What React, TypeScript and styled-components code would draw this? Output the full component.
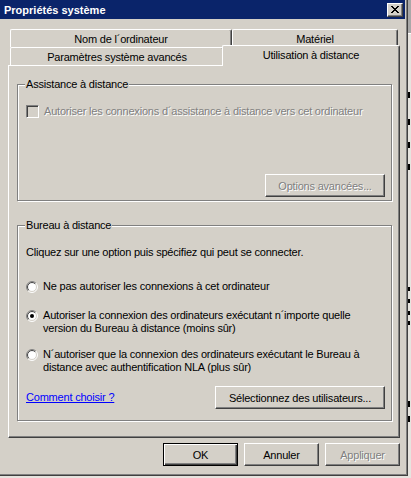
import React from "react";
import styled, { createGlobalStyle } from "styled-components";

const FACE = "#d4d0c8";
const SHADOW = "#808080";
const DARK = "#404040";

const GlobalStyle = createGlobalStyle`
  html, body {
    margin: 0;
    padding: 0;
    background: ${FACE};
  }
  body {
    font-family: "Liberation Sans", Arial, sans-serif;
    font-size: 11px;
    letter-spacing: -0.2px;
    color: #000;
  }
`;

const Screen = styled.div`
  width: 411px;
  height: 478px;
  display: flex;
  overflow: hidden;
  background: #e6e4df;
`;

const Frame = styled.div`
  width: 408px;
  height: 476px;
  flex-shrink: 0;
  box-sizing: border-box;
  padding: 0 2px 2px 0;
  background: ${FACE};
  border-right: 1px solid ${DARK};
  border-bottom: 1px solid ${DARK};
  box-shadow: inset -1px -1px ${SHADOW};
  display: flex;
  flex-direction: column;
`;

const TitleBar = styled.div`
  height: 19px;
  background: #0a246a;
  color: #fff;
  font-weight: bold;
  font-size: 11px;
  letter-spacing: 0;
  display: flex;
  align-items: center;
  justify-content: space-between;
  padding: 0 2px 0 4px;
`;

const CloseButton = styled.div`
  width: 16px;
  height: 14px;
  box-sizing: border-box;
  background: ${FACE};
  border: 1px solid;
  border-color: #fff ${DARK} ${DARK} #fff;
  box-shadow: inset -1px -1px ${SHADOW};
  display: flex;
  align-items: center;
  justify-content: center;
  padding-right: 1px;
`;

const Body = styled.div`
  padding: 10px 0 0 8px;
  display: flex;
  flex-direction: column;
`;

const TabRow = styled.div`
  display: flex;
  height: 18px;
  margin-left: 2px;
`;

const Tab = styled.div<{ $w: number; $selected?: boolean }>`
  width: ${(p) => p.$w}px;
  height: ${(p) => (p.$selected ? 21 : 18)}px;
  margin: ${(p) => (p.$selected ? "-2px -2px -1px -2px" : "0")};
  position: ${(p) => (p.$selected ? "relative" : "static")};
  z-index: ${(p) => (p.$selected ? 2 : 0)};
  box-sizing: border-box;
  background: ${FACE};
  border-top: 1px solid #fff;
  border-left: 1px solid #fff;
  border-right: 1px solid ${DARK};
  box-shadow: inset -1px 0 ${SHADOW};
  border-top-left-radius: 2px;
  border-top-right-radius: 2px;
  display: flex;
  justify-content: center;
  align-items: ${(p) => (p.$selected ? "flex-start" : "center")};
  padding-top: ${(p) => (p.$selected ? "3px" : "0")};
  white-space: nowrap;
`;

const Panel = styled.div`
  width: 392px;
  height: 373px;
  box-sizing: border-box;
  border: 1px solid;
  border-color: #fff ${DARK} ${DARK} #fff;
  box-shadow: inset -1px -1px ${SHADOW};
  padding: 12px 6px 0 8px;
  position: relative;
  z-index: 1;
`;

const Group = styled.fieldset<{ $top?: number }>`
  margin: ${(p) => p.$top ?? 0}px 0 0 0;
  padding: 0;
  width: 375px;
  box-sizing: border-box;
  border: 1px solid ${SHADOW};
  box-shadow: inset 1px 1px #fff, 1px 1px #fff;
`;

const Legend = styled.legend`
  margin-left: 7px;
  padding: 0 1px;
  line-height: 13px;
  background: ${FACE};
`;

const GroupBody = styled.div<{ $h: number }>`
  height: ${(p) => p.$h}px;
  box-sizing: border-box;
  padding: 0 6px 0 8px;
  display: flex;
  flex-direction: column;
`;

const Line = styled.div<{ $gap: number }>`
  margin-top: ${(p) => p.$gap}px;
  line-height: 13px;
`;

const OptionRow = styled.div<{ $gap: number; $disabled?: boolean }>`
  margin-top: ${(p) => p.$gap}px;
  display: flex;
  align-items: flex-start;
  gap: 5px;
  line-height: 13px;
  color: ${(p) => (p.$disabled ? SHADOW : "#000")};
  text-shadow: ${(p) => (p.$disabled ? "1px 1px #fff" : "none")};
`;

const CheckBox = styled.div`
  width: 13px;
  height: 13px;
  flex-shrink: 0;
  box-sizing: border-box;
  border: 1px solid;
  border-color: ${SHADOW} #fff #fff ${SHADOW};
  box-shadow: inset 1px 1px ${DARK}, inset -1px -1px ${FACE};
  background: ${FACE};
`;

const RadioBox = styled.svg`
  flex-shrink: 0;
  margin-top: 0.5px;
`;

const OptionText = styled.div`
  width: 320px;
`;

const Footer = styled.div<{ $gap: number }>`
  margin-top: ${(p) => p.$gap}px;
  display: flex;
  align-items: center;
  justify-content: space-between;
`;

const Link = styled.a`
  color: #0000ff;
  text-decoration: underline;
  line-height: 13px;
`;

const Button = styled.div<{ $w: number; $disabled?: boolean; $default?: boolean }>`
  width: ${(p) => p.$w}px;
  height: 23px;
  flex-shrink: 0;
  box-sizing: border-box;
  background: ${FACE};
  border: 1px solid;
  border-color: ${(p) =>
    p.$default ? "#000" : `#fff ${DARK} ${DARK} #fff`};
  box-shadow: ${(p) =>
    p.$default
      ? `inset 1px 1px #fff, inset -1px -1px ${DARK}, inset -2px -2px ${SHADOW}`
      : `inset -1px -1px ${SHADOW}`};
  display: flex;
  align-items: center;
  justify-content: center;
  color: ${(p) => (p.$disabled ? SHADOW : "#000")};
  text-shadow: ${(p) => (p.$disabled ? "1px 1px #fff" : "none")};
  white-space: nowrap;
`;

const CornerButton = styled(Button)`
  margin: auto 0 3px auto;
`;

const DialogButtons = styled.div`
  width: 392px;
  margin-top: 5px;
  display: flex;
  justify-content: flex-end;
  gap: 6px;
`;

const Behind = styled.div`
  flex: 1;
  display: flex;
  flex-direction: column;
`;

const BehindTop = styled.div`
  height: 33px;
  background: #a8a8a8;
  border-bottom: 1px solid #fff;
`;

const Mark = styled.div<{ $gap: number; $h?: number }>`
  margin-top: ${(p) => p.$gap}px;
  width: 2px;
  height: ${(p) => p.$h ?? 6}px;
  background: #000;
`;

const CloseGlyph = () => {
  const cells: React.ReactElement[] = [];
  for (let i = 0; i < 7; i++) {
    cells.push(<rect key={"a" + i} x={i} y={i} width={2} height={1} />);
    cells.push(<rect key={"b" + i} x={6 - i} y={i} width={2} height={1} />);
  }
  return (
    <svg width="8" height="7" viewBox="0 0 8 7" shapeRendering="crispEdges" fill="#000">
      {cells}
    </svg>
  );
};

const arc = (r: number, first: boolean) => {
  const d = r * 0.7071;
  const a = `${6 - d} ${6 + d}`;
  const b = `${6 + d} ${6 - d}`;
  return first ? `M${a} A${r} ${r} 0 0 1 ${b}` : `M${b} A${r} ${r} 0 0 1 ${a}`;
};

const Radio = ({ checked }: { checked?: boolean }) => (
  <RadioBox width="12" height="12" viewBox="0 0 12 12">
    <circle cx="6" cy="6" r="5" fill="#fff" />
    <path d={arc(5.5, true)} stroke={SHADOW} fill="none" />
    <path d={arc(5.5, false)} stroke="#fff" fill="none" />
    <path d={arc(4.5, true)} stroke={DARK} fill="none" />
    <path d={arc(4.5, false)} stroke={FACE} fill="none" />
    {checked && <circle cx="6" cy="6" r="2" fill="#000" />}
  </RadioBox>
);

export default function App() {
  return (
    <>
      <GlobalStyle />
      <Screen>
        <Frame>
          <TitleBar>
            <span>Propriétés système</span>
            <CloseButton>
              <CloseGlyph />
            </CloseButton>
          </TitleBar>
          <Body>
            <TabRow>
              <Tab $w={222}>Nom de l´ordinateur</Tab>
              <Tab $w={166}>Matériel</Tab>
            </TabRow>
            <TabRow>
              <Tab $w={214}>Paramètres système avancés</Tab>
              <Tab $w={178} $selected>
                Utilisation à distance
              </Tab>
            </TabRow>
            <Panel>
              <Group>
                <Legend>Assistance à distance</Legend>
                <GroupBody $h={109}>
                  <OptionRow $gap={14} $disabled>
                    <CheckBox />
                    <span>Autoriser les connexions d´assistance à distance vers cet ordinateur</span>
                  </OptionRow>
                  <CornerButton $w={120} $disabled>
                    Options avancées...
                  </CornerButton>
                </GroupBody>
              </Group>
              <Group $top={18}>
                <Legend>Bureau à distance</Legend>
                <GroupBody $h={188}>
                  <Line $gap={14}>Cliquez sur une option puis spécifiez qui peut se connecter.</Line>
                  <OptionRow $gap={21}>
                    <Radio />
                    <OptionText>Ne pas autoriser les connexions à cet ordinateur</OptionText>
                  </OptionRow>
                  <OptionRow $gap={16}>
                    <Radio checked />
                    <OptionText>
                      Autoriser la connexion des ordinateurs exécutant n´importe quelle version du Bureau à distance (moins sûr)
                    </OptionText>
                  </OptionRow>
                  <OptionRow $gap={13}>
                    <Radio />
                    <OptionText>
                      N´autoriser que la connexion des ordinateurs exécutant le Bureau à distance avec authentification NLA (plus sûr)
                    </OptionText>
                  </OptionRow>
                  <Footer $gap={12}>
                    <Link>Comment choisir ?</Link>
                    <Button $w={170}>Sélectionnez des utilisateurs...</Button>
                  </Footer>
                </GroupBody>
              </Group>
            </Panel>
            <DialogButtons>
              <Button $w={75} $default>
                OK
              </Button>
              <Button $w={75}>Annuler</Button>
              <Button $w={75} $disabled>
                Appliquer
              </Button>
            </DialogButtons>
          </Body>
        </Frame>
        <Behind>
          <BehindTop />
          <Mark $gap={58} />
          <Mark $gap={21} />
          <Mark $gap={17} />
          <Mark $gap={16} />
          <Mark $gap={117} $h={4} />
          <Mark $gap={8} $h={4} />
          <Mark $gap={8} $h={4} />
          <Mark $gap={6} $h={4} />
          <Mark $gap={76} />
          <Mark $gap={9} />
        </Behind>
      </Screen>
    </>
  );
}
